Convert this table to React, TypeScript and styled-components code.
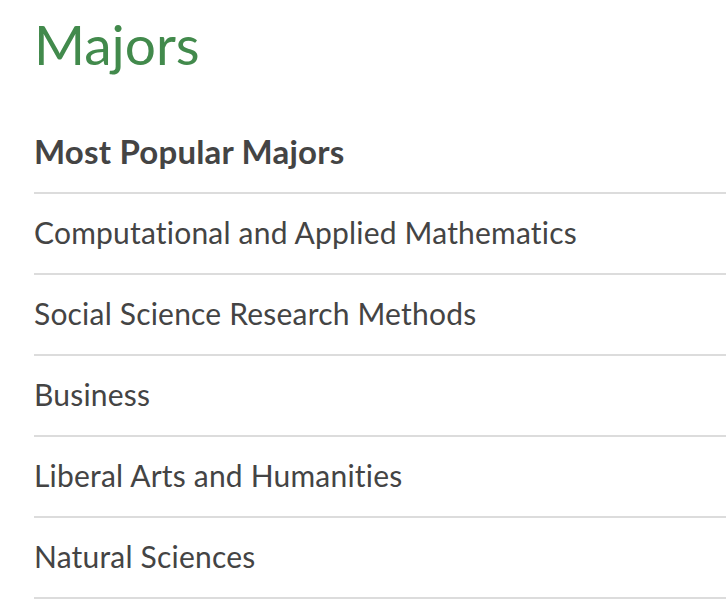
import React from "react";
import styled, { createGlobalStyle } from "styled-components";

const Global = createGlobalStyle`
  html, body { margin: 0; padding: 0; background: #fff; }
  body {
    font-family: "Lato", "Open Sans", sans-serif;
    font-variant-ligatures: none;
  }
`;

const Page = styled.div`
  padding-left: 34px;
  padding-top: 8px;
  overflow: hidden;
`;

const Title = styled.h1`
  margin: 0;
  font-size: 55px;
  line-height: 72px;
  font-weight: 400;
  color: #428a4c;
`;

const List = styled.ul`
  list-style: none;
  margin: 33px -2px 0 0;
  padding: 0;
`;

const Row = styled.li<{ $head?: boolean }>`
  box-sizing: border-box;
  height: 81px;
  padding-bottom: 3px;
  display: flex;
  align-items: center;
  border-bottom: 2px solid #dcdcdc;
  font-size: ${(p) => (p.$head ? "33px" : "30px")};
  letter-spacing: 0.2px;
  font-weight: ${(p) => (p.$head ? 700 : 400)};
  color: #444;
`;

const majors = [
  "Computational and Applied Mathematics",
  "Social Science Research Methods",
  "Business",
  "Liberal Arts and Humanities",
  "Natural Sciences",
];

export default function App() {
  return (
    <>
      <Global />
      <Page>
        <Title>Majors</Title>
        <List>
          <Row $head>Most Popular Majors</Row>
          {majors.map((m) => (
            <Row key={m}>{m}</Row>
          ))}
        </List>
      </Page>
    </>
  );
}
